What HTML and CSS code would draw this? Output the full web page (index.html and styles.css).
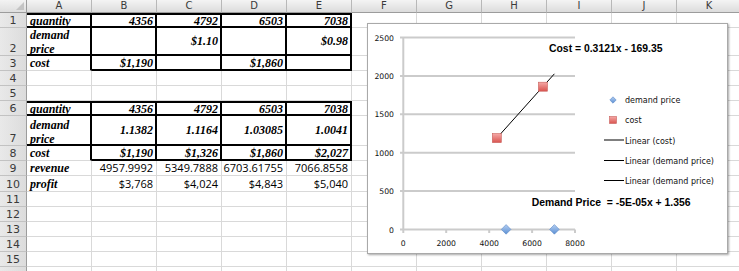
FILE: index.html
```html
<!DOCTYPE html>
<html>
<head>
<meta charset="utf-8">
<link rel="stylesheet" href="styles.css">
</head>
<body>
<div class="page">
  <div class="sheet">
    <div class="corner"><span class="tri"></span></div>
    <div class="ch">A</div><div class="ch">B</div><div class="ch">C</div><div class="ch">D</div><div class="ch">E</div><div class="ch">F</div><div class="ch">G</div><div class="ch">H</div><div class="ch">I</div><div class="ch">J</div><div class="ch">K</div>

    <div class="rh">1</div>
    <div class="c lab ta tt">quantity</div>
    <div class="c bi tb tt">4356</div><div class="c bi tb tt">4792</div><div class="c bi tb tt">6503</div><div class="c bi tb tt">7038</div>
    <div class="c"></div><div class="c"></div><div class="c"></div><div class="c"></div><div class="c"></div><div class="c"></div>

    <div class="rh">2</div>
    <div class="c lab wrap ta"><span>demand price</span></div>
    <div class="c bi tb"></div><div class="c bi tb">$1.10</div><div class="c bi tb"></div><div class="c bi tb">$0.98</div>
    <div class="c"></div><div class="c"></div><div class="c"></div><div class="c"></div><div class="c"></div><div class="c"></div>

    <div class="rh">3</div>
    <div class="c lab tar">cost</div>
    <div class="c bi tb">$1,190</div><div class="c bi tb"></div><div class="c bi tb">$1,860</div><div class="c bi tb"></div>
    <div class="c"></div><div class="c"></div><div class="c"></div><div class="c"></div><div class="c"></div><div class="c"></div>

    <div class="rh">4</div>
    <div class="c"></div><div class="c"></div><div class="c"></div><div class="c"></div><div class="c"></div><div class="c"></div><div class="c"></div><div class="c"></div><div class="c"></div><div class="c"></div><div class="c"></div>

    <div class="rh">5</div>
    <div class="c"></div><div class="c"></div><div class="c"></div><div class="c"></div><div class="c"></div><div class="c"></div><div class="c"></div><div class="c"></div><div class="c"></div><div class="c"></div><div class="c"></div>

    <div class="rh">6</div>
    <div class="c lab ta tt">quantity</div>
    <div class="c bi tb tt">4356</div><div class="c bi tb tt">4792</div><div class="c bi tb tt">6503</div><div class="c bi tb tt">7038</div>
    <div class="c"></div><div class="c"></div><div class="c"></div><div class="c"></div><div class="c"></div><div class="c"></div>

    <div class="rh">7</div>
    <div class="c lab wrap ta"><span>demand price</span></div>
    <div class="c bi tb">1.1382</div><div class="c bi tb">1.1164</div><div class="c bi tb">1.03085</div><div class="c bi tb">1.0041</div>
    <div class="c"></div><div class="c"></div><div class="c"></div><div class="c"></div><div class="c"></div><div class="c"></div>

    <div class="rh">8</div>
    <div class="c lab tar">cost</div>
    <div class="c bi tb">$1,190</div><div class="c bi tb">$1,326</div><div class="c bi tb">$1,860</div><div class="c bi tb">$2,027</div>
    <div class="c"></div><div class="c"></div><div class="c"></div><div class="c"></div><div class="c"></div><div class="c"></div>

    <div class="rh">9</div>
    <div class="c lab">revenue</div>
    <div class="c num">4957.9992</div><div class="c num">5349.7888</div><div class="c num">6703.61755</div><div class="c num">7066.8558</div>
    <div class="c"></div><div class="c"></div><div class="c"></div><div class="c"></div><div class="c"></div><div class="c"></div>

    <div class="rh">10</div>
    <div class="c lab">profit</div>
    <div class="c num">$3,768</div><div class="c num">$4,024</div><div class="c num">$4,843</div><div class="c num">$5,040</div>
    <div class="c"></div><div class="c"></div><div class="c"></div><div class="c"></div><div class="c"></div><div class="c"></div>

    <div class="rh">11</div>
    <div class="c"></div><div class="c"></div><div class="c"></div><div class="c"></div><div class="c"></div><div class="c"></div><div class="c"></div><div class="c"></div><div class="c"></div><div class="c"></div><div class="c"></div>

    <div class="rh">12</div>
    <div class="c"></div><div class="c"></div><div class="c"></div><div class="c"></div><div class="c"></div><div class="c"></div><div class="c"></div><div class="c"></div><div class="c"></div><div class="c"></div><div class="c"></div>

    <div class="rh">13</div>
    <div class="c"></div><div class="c"></div><div class="c"></div><div class="c"></div><div class="c"></div><div class="c"></div><div class="c"></div><div class="c"></div><div class="c"></div><div class="c"></div><div class="c"></div>

    <div class="rh">14</div>
    <div class="c"></div><div class="c"></div><div class="c"></div><div class="c"></div><div class="c"></div><div class="c"></div><div class="c"></div><div class="c"></div><div class="c"></div><div class="c"></div><div class="c"></div>

    <div class="rh">15</div>
    <div class="c"></div><div class="c"></div><div class="c"></div><div class="c"></div><div class="c"></div><div class="c"></div><div class="c"></div><div class="c"></div><div class="c"></div><div class="c"></div><div class="c"></div>

    <div class="rh"></div>
    <div class="c"></div><div class="c"></div><div class="c"></div><div class="c"></div><div class="c"></div><div class="c"></div><div class="c"></div><div class="c"></div><div class="c"></div><div class="c"></div><div class="c"></div>
  </div>

  <div class="chart">
    <svg width="359" height="229" viewBox="0 0 359 229" xmlns="http://www.w3.org/2000/svg">
      <defs>
        <linearGradient id="sq" x1="0" y1="0" x2="0" y2="1">
          <stop offset="0" stop-color="#f5a9a7"/>
          <stop offset="1" stop-color="#d9544f"/>
        </linearGradient>
        <linearGradient id="dm" x1="0" y1="0" x2="0" y2="1">
          <stop offset="0" stop-color="#b5cff2"/>
          <stop offset="1" stop-color="#5b8fd3"/>
        </linearGradient>
      </defs>
      <g class="grid">
        <line x1="32" y1="13.5" x2="207" y2="13.5"/>
        <line x1="32" y1="51.9" x2="207" y2="51.9"/>
        <line x1="32" y1="90.3" x2="207" y2="90.3"/>
        <line x1="32" y1="128.7" x2="207" y2="128.7"/>
        <line x1="32" y1="167.1" x2="207" y2="167.1"/>
        <line x1="32" y1="205.5" x2="207" y2="205.5"/>
        <line x1="35.3" y1="13.5" x2="35.3" y2="205.5"/>
        <line x1="78.2" y1="205.5" x2="78.2" y2="209"/>
        <line x1="121.2" y1="205.5" x2="121.2" y2="209"/>
        <line x1="164.1" y1="205.5" x2="164.1" y2="209"/>
        <line x1="207" y1="205.5" x2="207" y2="209"/>
        <line x1="35.3" y1="205.5" x2="35.3" y2="209"/>
      </g>
      <g class="ylab">
        <text x="26" y="16.5">2500</text>
        <text x="26" y="54.9">2000</text>
        <text x="26" y="93.3">1500</text>
        <text x="26" y="131.7">1000</text>
        <text x="26" y="170.1">500</text>
        <text x="26" y="208.5">0</text>
      </g>
      <g class="xlab">
        <text x="35.3" y="222">0</text>
        <text x="78.2" y="222">2000</text>
        <text x="121.2" y="222">4000</text>
        <text x="164.1" y="222">6000</text>
        <text x="207" y="222">8000</text>
      </g>
      <line class="trend" x1="128.8" y1="114.1" x2="186.4" y2="49.8"/>
      <rect class="sqm" x="124.3" y="109.6" width="9" height="9"/>
      <rect class="sqm" x="170.4" y="58.2" width="9" height="9"/>
      <polygon class="dmm" points="138.1,200.6 142.9,205.4 138.1,210.2 133.3,205.4"/>
      <polygon class="dmm" points="186.4,200.6 191.2,205.4 186.4,210.2 181.6,205.4"/>
      <text class="eq" x="181" y="28">Cost = 0.3121x - 169.35</text>
      <text class="eq" x="163.7" y="181.5" xml:space="preserve">Demand Price  = -5E-05x + 1.356</text>
      <g class="leg">
        <polygon class="dmm" points="245,72.8 248.2,76 245,79.2 241.8,76"/>
        <text x="257" y="79">demand price</text>
        <rect class="sqm" x="241.5" y="92.5" width="7" height="7"/>
        <text x="257" y="99">cost</text>
        <line class="trend" x1="236" y1="116" x2="256" y2="116"/>
        <text x="257" y="119.5">Linear (cost)</text>
        <line class="trend" x1="236" y1="136.5" x2="256" y2="136.5"/>
        <text x="257" y="140">Linear (demand price)</text>
        <line class="trend" x1="236" y1="156.5" x2="256" y2="156.5"/>
        <text x="257" y="160">Linear (demand price)</text>
      </g>
    </svg>
  </div>
</div>
</body>
</html>
```

FILE: styles.css
```css
html, body {
  margin: 0;
  padding: 0;
  background: #fff;
  overflow: hidden;
}

.page {
  position: relative;
  width: 739px;
  height: 271px;
  overflow: hidden;
}

.sheet {
  display: grid;
  grid-template-columns: 27px repeat(11, 65px);
  grid-template-rows: 13px 15px 28px 15px 15px 15px 15px 30px 15px 15px 16px 15px 15px 15px 15px 15px 15px;
  width: 742px;
}

.corner {
  box-sizing: border-box;
  background: linear-gradient(#f3f3f3, #dedede);
  border-right: 1px solid #9c9c9c;
  border-bottom: 1px solid #9c9c9c;
  position: relative;
}

.tri {
  position: absolute;
  right: 2px;
  bottom: 2px;
  width: 0;
  height: 0;
  border-left: 8px solid transparent;
  border-bottom: 8px solid #c4c4c4;
}

.ch {
  box-sizing: border-box;
  background: linear-gradient(#f4f4f4, #dcdcdc);
  border-right: 1px solid #b8b8b8;
  border-bottom: 1px solid #9c9c9c;
  font: 10px/12px "DejaVu Sans", sans-serif;
  color: #3a3a3a;
  text-align: center;
}

.rh {
  box-sizing: border-box;
  background: linear-gradient(90deg, #e9e9e9, #dcdcdc);
  border-right: 1px solid #9c9c9c;
  border-bottom: 1px solid #c2c2c2;
  font: 11px "DejaVu Sans", sans-serif;
  color: #3a3a3a;
  display: flex;
  align-items: flex-end;
  justify-content: center;
  padding-bottom: 0;
}

.c {
  box-sizing: border-box;
  border-right: 1px solid #d9d9d9;
  border-bottom: 1px solid #d9d9d9;
  display: flex;
  align-items: center;
  justify-content: flex-end;
  padding: 0 2px 0 2px;
  white-space: nowrap;
  overflow: hidden;
  color: #000;
}

.bi {
  font: italic bold 12px/14px "Liberation Serif", serif;
}

.num {
  font: 11px/14px "Open Sans", sans-serif;
  padding-right: 3px;
}

.lab {
  justify-content: flex-start;
  font: italic bold 12px/14px "Liberation Serif", serif;
  padding-left: 3px;
}

.wrap {
  white-space: normal;
  align-items: flex-end;
  overflow: visible;
}

.wrap span {
  margin-bottom: -2px;
}

.tb {
  border-right: 2px solid #000;
  border-bottom: 2px solid #000;
}

.tt {
  border-top: 2px solid #000;
}

.ta {
  border-right: 2px solid #000;
  border-bottom: 2px solid #000;
}

.tar {
  border-right: 2px solid #000;
}

.chart {
  position: absolute;
  left: 367px;
  top: 23px;
  width: 359px;
  height: 229px;
  background: #fff;
  border: 1px solid #a9a9a9;
  box-shadow: 1px 1px 2px rgba(0, 0, 0, 0.35);
}

.chart svg {
  display: block;
}

.grid line {
  stroke: #cbcbcb;
  stroke-width: 2;
}

.ylab text {
  font: 7.7px "DejaVu Sans", sans-serif;
  fill: #111;
  text-anchor: end;
}

.xlab text {
  font: 7.7px "DejaVu Sans", sans-serif;
  fill: #111;
  text-anchor: middle;
}

.trend {
  stroke: #000;
  stroke-width: 1;
}

.sqm {
  fill: url(#sq);
  stroke: #c9605c;
  stroke-width: 0.6;
}

.dmm {
  fill: url(#dm);
  stroke: #5a88c6;
  stroke-width: 0.6;
}

.eq {
  font: bold 10.4px "Liberation Sans", sans-serif;
  fill: #000;
}

.leg text {
  font: 8px "DejaVu Sans", sans-serif;
  fill: #111;
}
```
